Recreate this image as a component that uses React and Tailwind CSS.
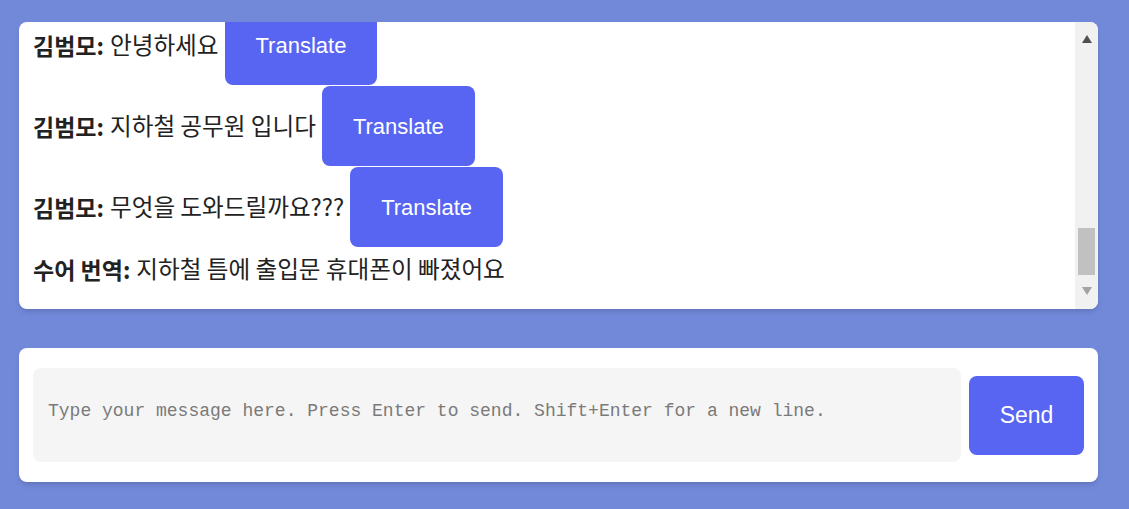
const MESSAGES = [
  { name: "김범모", text: "안녕하세요", translate: true },
  { name: "김범모", text: "지하철 공무원 입니다", translate: true },
  { name: "김범모", text: "무엇을 도와드릴까요???", translate: true },
  { name: "수어 번역", text: "지하철 틈에 출입문 휴대폰이 빠졌어요", translate: false },
];

export default function App() {
  return (
    <div className="min-h-[509px] bg-[#7289da] pt-[22px] pb-[27px] font-['Noto_Sans_CJK_KR','Liberation_Sans',sans-serif]">
      {/* CHAT LOG (scrolled to the newest message) */}
      <div className="ml-[19px] w-[1079px] h-[287px] flex bg-white rounded-lg shadow-md overflow-hidden">
        <div className="flex-1 flex flex-col justify-end overflow-hidden pl-[14px] pb-[19px]">
          {MESSAGES.map((m, i) => (
            <Message key={i} {...m} />
          ))}
        </div>
        <Scrollbar />
      </div>

      {/* INPUT */}
      <div className="ml-[19px] mt-[39px] w-[1079px] h-[134px] bg-white rounded-lg shadow-md flex items-center gap-2 px-[14px]">
        <textarea
          placeholder="Type your message here. Press Enter to send. Shift+Enter for a new line."
          className="flex-1 h-[94px] resize-none bg-[#f5f5f5] rounded-lg pl-[15px] pt-[30px] text-[18px] leading-[27px] font-['Liberation_Mono',monospace] text-[#333] placeholder:text-[#7a7a7a] outline-none"
        />
        <button className="w-[115px] h-[79px] bg-[#5865f2] text-white rounded-lg text-[23px] font-['Liberation_Sans',sans-serif]">
          Send
        </button>
      </div>
    </div>
  );
}

function Message({ name, text, translate }) {
  return (
    <div
      className={`shrink-0 flex items-center text-[23px] text-[#222] ${
        translate ? "h-[80px] mb-px" : "h-[42px]"
      }`}
    >
      <span className="font-bold">{name}:</span>
      <span className="ml-[6px] text-[23.6px]">{text}</span>
      {translate && (
        <button className="ml-[6px] h-[80px] px-[31px] bg-[#5865f2] text-white rounded-lg text-[22px] font-['Liberation_Sans',sans-serif]">
          Translate
        </button>
      )}
    </div>
  );
}

/* ---------- UI ---------- */

function Scrollbar() {
  return (
    <div className="w-[23px] shrink-0 bg-[#f1f1f1] flex flex-col items-center pt-[13px] pb-[14px]">
      <svg width="10" height="8" viewBox="0 0 10 8">
        <path d="M5 0 L10 8 L0 8 Z" fill="#505050" />
      </svg>
      <div className="flex-1" />
      <div className="w-[17px] h-[47px] bg-[#c1c1c1]" />
      <div className="h-[12px]" />
      <svg width="10" height="8" viewBox="0 0 10 8">
        <path d="M0 0 L10 0 L5 8 Z" fill="#a3a3a3" />
      </svg>
    </div>
  );
}
